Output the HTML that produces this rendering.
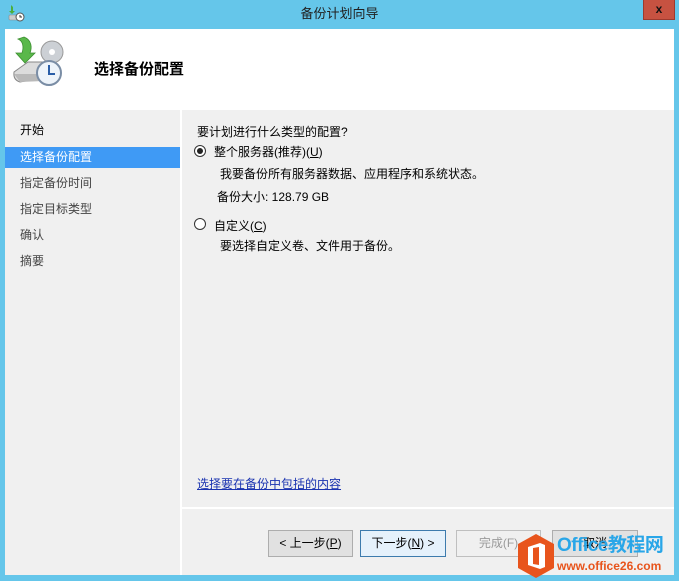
<!DOCTYPE html>
<html><head><meta charset="utf-8"><style>
*{margin:0;padding:0;box-sizing:border-box}
body{width:679px;height:581px;background:#65c6ea;position:relative;overflow:hidden;font-family:"Liberation Sans","Noto Sans CJK SC",sans-serif;font-size:12px;color:#000}
.a{position:absolute}
.t{position:absolute;white-space:nowrap;line-height:14px}
.btn{position:absolute;height:27px;top:530px;border:1px solid #adadad;background:#e1e1e1;text-align:center;line-height:25px;font-size:12px}
u{text-decoration:underline}
</style></head><body>
<div class="t" style="left:0;width:679px;top:7px;text-align:center;font-size:13px;color:#222">备份计划向导</div>
<div class="a" style="left:643px;top:0;width:32px;height:20px;background:#c75241;border:1px solid #9d3a2e;border-top:none;color:#111;font-weight:bold;text-align:center;line-height:18px;font-size:12px">x</div>
<svg class="a" style="left:7px;top:4px" width="18" height="18" viewBox="0 0 18 18"><path d="M4 1 L4 7 L2 7 L5 10 L8 7 L6 7 L6 3Z" fill="#4cae3c"/><rect x="2" y="11" width="9" height="5" rx="1" fill="#ccc" stroke="#888" stroke-width=".6"/><circle cx="13" cy="13" r="4" fill="#fff" stroke="#555"/><path d="M13 11v2h2" stroke="#333" fill="none"/></svg>
<div class="a" style="left:5px;top:29px;width:669px;height:546px;background:#fff"></div>
<svg class="a" style="left:10px;top:34px" width="55" height="55" viewBox="0 0 55 55"><path d="M14 3 C22 6 22 14 20 19 L25 19 L15 29 L6 19 L12 19 C14 13 13 7 8 5Z" fill="#5ab84a" stroke="#3c8f30" stroke-width=".8"/><circle cx="42" cy="18" r="11" fill="#ccd0d5" stroke="#999"/><circle cx="42" cy="18" r="3" fill="#fff"/><path d="M4 38 L18 28 L44 28 L44 42 L10 48 Q3 46 4 38Z" fill="#dcdcdc" stroke="#888"/><path d="M4 40 L34 40 L34 47 L10 48Z" fill="#b9b9b9"/><circle cx="39" cy="39" r="12" fill="#eef4fa" stroke="#7a8da5" stroke-width="2"/><path d="M39 31v9h6" stroke="#2a5ea8" stroke-width="2" fill="none"/></svg>
<div class="t" style="left:94px;top:61px;font-size:15px;font-weight:bold;line-height:17px">选择备份配置</div>
<div class="a" style="left:5px;top:110px;width:175px;height:465px;background:#f0f0f0"></div>
<div class="a" style="left:182px;top:110px;width:492px;height:397px;background:#f0f0f0"></div>
<div class="a" style="left:182px;top:509px;width:492px;height:66px;background:#f0f0f0"></div>
<div class="a" style="left:5px;top:147px;width:175px;height:21px;background:#3f9af5"></div>
<div class="t" style="left:20px;top:123px">开始</div>
<div class="t" style="left:20px;top:150px;color:#fff">选择备份配置</div>
<div class="t" style="left:20px;top:176px;color:#444">指定备份时间</div>
<div class="t" style="left:20px;top:202px;color:#444">指定目标类型</div>
<div class="t" style="left:20px;top:228px;color:#444">确认</div>
<div class="t" style="left:20px;top:254px;color:#444">摘要</div>
<div class="t" style="left:197px;top:125px">要计划进行什么类型的配置?</div>
<div class="a" style="left:194px;top:145px;width:12px;height:12px;border:1px solid #333;border-radius:50%;background:#fff"><div class="a" style="left:2px;top:2px;width:6px;height:6px;border-radius:50%;background:#222"></div></div>
<div class="t" style="left:214px;top:145px">整个服务器(推荐)(<u>U</u>)</div>
<div class="t" style="left:220px;top:167px">我要备份所有服务器数据、应用程序和系统状态。</div>
<div class="t" style="left:217px;top:190px">备份大小: 128.79 GB</div>
<div class="a" style="left:194px;top:218px;width:12px;height:12px;border:1px solid #333;border-radius:50%;background:#fff"></div>
<div class="t" style="left:214px;top:219px">自定义(<u>C</u>)</div>
<div class="t" style="left:220px;top:239px">要选择自定义卷、文件用于备份。</div>
<div class="t" style="left:197px;top:477px;color:#1a33b0;text-decoration:underline">选择要在备份中包括的内容</div>
<div class="btn" style="left:268px;width:85px">&lt; 上一步(<u>P</u>)</div>
<div class="btn" style="left:360px;width:86px;border-color:#3d7bad;background:#e5f1fb">下一步(<u>N</u>) &gt;</div>
<div class="btn" style="left:456px;width:85px;background:#f0f0f0;border-color:#bfbfbf;color:#9a9a9a">完成(F)</div>
<div class="btn" style="left:552px;width:86px">取消</div>
<svg class="a" style="left:516px;top:533px" width="40" height="46" viewBox="0 0 40 46"><path d="M20 1 L38 11 L38 35 L20 45 L2 35 L2 11Z" fill="#e8541c"/><path d="M12 14 L24 10 L29 12 L29 34 L24 36 L12 32Z" fill="#fff"/><path d="M17 15 L23 14 L23 32 L17 31Z" fill="#e8541c"/></svg>
<div class="t" style="left:557px;top:536px;font-size:19px;line-height:20px;font-weight:bold;color:#29a6e8;letter-spacing:-0.5px">Office教程网</div>
<div class="t" style="left:557px;top:560px;font-size:12px;line-height:13px;font-weight:bold;color:#e8541c">www.office26.com</div>
</body></html>
